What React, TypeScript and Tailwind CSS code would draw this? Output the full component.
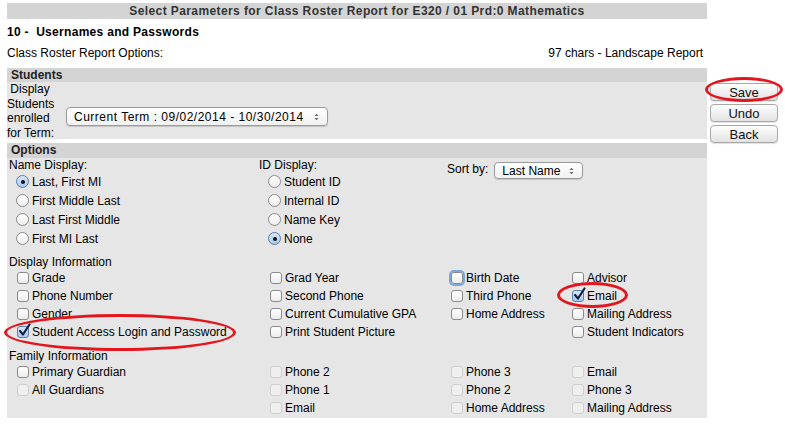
import React from 'react'

const font = { fontFamily: '"Liberation Sans", Arial, sans-serif' }

const Box = ({ checked, disabled, focus }: { checked?: boolean; disabled?: boolean; focus?: boolean }) => (
    <span className="relative inline-block w-[12px] h-[12px] shrink-0">
        <span
            className={
                'absolute inset-0 rounded-[3px] border ' +
                (disabled
                    ? 'border-[#cfcfcf] bg-[#efefef]'
                    : checked
                        ? 'border-[#5a7fb0] bg-gradient-to-b from-[#d8e8fb] to-[#a9c8ee]'
                        : 'border-[#8a8a8a] bg-gradient-to-b from-white to-[#ececec]') +
                (focus ? ' shadow-[0_0_0_2px_#7aa7e0]' : '')
            }
        />
        {checked && (
            <svg className="absolute left-[1px] top-[-3px]" width="13" height="14" viewBox="0 0 13 14">
                <path d="M2 8 L5 11.5 L11.5 1.5" fill="none" stroke="#14204a" strokeWidth="2.2" strokeLinecap="round" strokeLinejoin="round" />
            </svg>
        )}
    </span>
)

const Radio = ({ checked }: { checked?: boolean }) => (
    <span
        className={
            'relative inline-flex items-center justify-center w-[13px] h-[13px] rounded-full border shrink-0 ' +
            (checked ? 'border-[#5a7fb0] bg-gradient-to-b from-[#d8e8fb] to-[#a9c8ee]' : 'border-[#8a8a8a] bg-gradient-to-b from-white to-[#eeeeee]')
        }
    >
        {checked && <span className="w-[4px] h-[4px] rounded-full bg-[#111]" />}
    </span>
)

const Check = ({ label, checked, disabled, focus }: { label?: string; checked?: boolean; disabled?: boolean; focus?: boolean }) =>
    label ? (
        <div className="flex items-center h-[18px] gap-[3px]">
            <Box checked={checked} disabled={disabled} focus={focus} />
            <span>{label}</span>
        </div>
    ) : (
        <div className="h-[18px]" />
    )

const RadioRow = ({ label, checked }: { label: string; checked?: boolean }) => (
    <div className="flex items-center h-[19px] gap-[3px] pl-[9px]">
        <Radio checked={checked} />
        <span>{label}</span>
    </div>
)

const Arrows = () => (
    <svg width="5" height="8" viewBox="0 0 5 8">
        <path d="M0.5 3 L2.5 0.8 L4.5 3 Z M0.5 5 L2.5 7.2 L4.5 5 Z" fill="#666" />
    </svg>
)

const FakeSelect = ({ value, className }: { value: string; className: string }) => (
    <div
        className={
            'flex items-center justify-between rounded-[4px] border border-[#9a9a9a] bg-gradient-to-b from-white to-[#f1f1f1] pl-[7px] pr-[8px] shadow-[0_1px_1px_rgba(0,0,0,0.15)] ' +
            className
        }
    >
        <span>{value}</span>
        <Arrows />
    </div>
)

const Btn = ({ label }: { label: string }) => (
    <button className="w-[68px] h-[18px] rounded-[4px] border border-[#a8a8a8] bg-gradient-to-b from-white to-[#e2e2e2] text-[13px] leading-none text-[#111] shadow-[0_1px_1px_rgba(0,0,0,0.12)]">
        {label}
    </button>
)

const displayInfo: { label?: string; checked?: boolean; focus?: boolean }[][] = [
    [{ label: 'Grade' }, { label: 'Grad Year' }, { label: 'Birth Date', focus: true }, { label: 'Advisor' }],
    [{ label: 'Phone Number' }, { label: 'Second Phone' }, { label: 'Third Phone' }, { label: 'Email', checked: true }],
    [{ label: 'Gender' }, { label: 'Current Cumulative GPA' }, { label: 'Home Address' }, { label: 'Mailing Address' }],
    [{ label: 'Student Access Login and Password', checked: true }, { label: 'Print Student Picture' }, {}, { label: 'Student Indicators' }],
]

const familyInfo: { label?: string; disabled?: boolean }[][] = [
    [{ label: 'Primary Guardian' }, { label: 'Phone 2', disabled: true }, { label: 'Phone 3', disabled: true }, { label: 'Email', disabled: true }],
    [{ label: 'All Guardians', disabled: true }, { label: 'Phone 1', disabled: true }, { label: 'Phone 2', disabled: true }, { label: 'Phone 3', disabled: true }],
    [{}, { label: 'Email', disabled: true }, { label: 'Home Address', disabled: true }, { label: 'Mailing Address', disabled: true }],
]

const CheckGrid = ({ rows }: { rows: { label?: string; checked?: boolean; disabled?: boolean; focus?: boolean }[][] }) => (
    <div className="grid grid-cols-[253px_181px_121px_1fr] pl-[10px]">
        {rows.flat().map((c, i) => (
            <Check key={i} label={c.label} checked={c.checked} disabled={c.disabled} focus={c.focus} />
        ))}
    </div>
)

export default function App() {
    return (
        <div className="relative w-[785px] h-[430px] bg-white text-[12px] text-black overflow-hidden" style={font}>
            <div className="flex pt-[3px]">
                <div className="w-[700px] ml-[7px]">
                    <div className="h-[16px] bg-[#d4d4d4] text-center font-bold text-[#333] leading-[16px] tracking-[0.4px]">
                        Select Parameters for Class Roster Report for E320 / 01 Prd:0 Mathematics
                    </div>
                    <div className="h-[14px] mt-[6px] font-bold leading-[14px] tracking-[0.3px]">10 -&nbsp; Usernames and Passwords</div>
                    <div className="flex justify-between h-[14px] mt-[7px] pr-[4px] leading-[14px]">
                        <span>Class Roster Report Options:</span>
                        <span>97 chars - Landscape Report</span>
                    </div>

                    {/* Students */}
                    <div className="mt-[8px]">
                        <div className="h-[14px] bg-[#d4d4d4] font-bold text-[#222] pl-[4px] leading-[14px]">Students</div>
                        <div className="bg-[#e6e6e6] h-[57px] flex items-center">
                            <div className="w-[58px] leading-[14.5px] self-start">
                                &nbsp;Display Students enrolled for Term:
                            </div>
                            <FakeSelect
                                value="Current Term : 09/02/2014 - 10/30/2014"
                                className="ml-[1px] w-[262px] h-[19px] mt-[12px] text-[12px] tracking-[0.5px]"
                            />
                        </div>
                    </div>

                    {/* Options */}
                    <div className="mt-[4px]">
                        <div className="h-[15px] bg-[#d4d4d4] font-bold text-[#222] pl-[4px] leading-[15px]">Options</div>
                        <div className="bg-[#e6e6e6] h-[260px]">
                            <div className="flex">
                                <div className="w-[252px]">
                                    <div className="h-[14px] leading-[14px] pl-[2px]">Name Display:</div>
                                    <RadioRow label="Last, First MI" checked />
                                    <RadioRow label="First Middle Last" />
                                    <RadioRow label="Last First Middle" />
                                    <RadioRow label="First MI Last" />
                                </div>
                                <div className="w-[188px]">
                                    <div className="h-[14px] leading-[14px]">ID Display:</div>
                                    <RadioRow label="Student ID" />
                                    <RadioRow label="Internal ID" />
                                    <RadioRow label="Name Key" />
                                    <RadioRow label="None" checked />
                                </div>
                                <div className="flex items-start gap-[6px] mt-[4px]">
                                    <span className="leading-[14px]">Sort by:</span>
                                    <FakeSelect value="Last Name" className="w-[89px] h-[17px] text-[12px]" />
                                </div>
                            </div>

                            <div className="h-[14px] leading-[14px] mt-[7px] pl-[2px]">Display Information</div>
                            <CheckGrid rows={displayInfo} />

                            <div className="h-[14px] leading-[14px] mt-[8px] pl-[2px]">Family Information</div>
                            <CheckGrid rows={familyInfo} />
                        </div>
                    </div>
                </div>

                <div className="flex flex-col gap-[3px] ml-[3px] mt-[80px]">
                    <Btn label="Save" />
                    <Btn label="Undo" />
                    <Btn label="Back" />
                </div>
            </div>

            {/* red annotation ellipses */}
            <div className="absolute left-[705px] top-[77px] w-[78px] h-[25px] rounded-[50%] border-[3px] border-[#e3161e]" />
            <div className="absolute left-[4px] top-[314px] w-[232px] h-[37px] rounded-[50%] border-[3px] border-[#e3161e]" />
            <div className="absolute left-[557px] top-[282px] w-[71px] h-[26px] rounded-[50%] border-[3px] border-[#e3161e]" />
        </div>
    )
}
